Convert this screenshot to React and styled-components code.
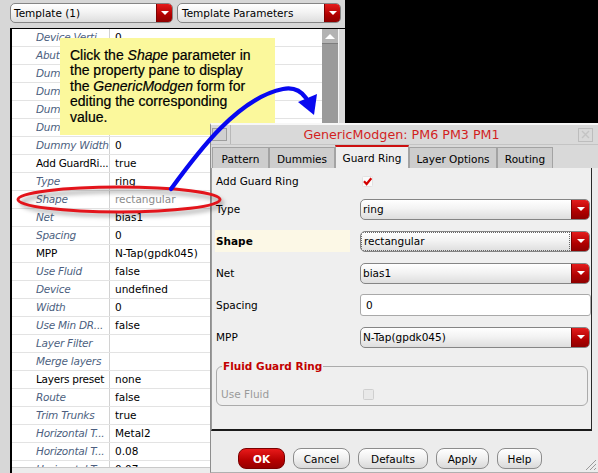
import React from "react";
import styled, { createGlobalStyle } from "styled-components";

const GlobalStyle = createGlobalStyle`
  html, body {
    margin: 0;
    padding: 0;
    background: #000;
  }
  body {
    font-family: "DejaVu Sans", "Noto Sans", sans-serif;
    font-size: 10.5px;
    color: #000;
  }
`;

const Screen = styled.div`
  position: relative;
  width: 598px;
  height: 473px;
  overflow: hidden;
  display: flex;
  background: #000;
`;

/* ---------- left property pane ---------- */

const LeftPane = styled.div`
  width: 345px;
  height: 100%;
  box-sizing: border-box;
  padding-left: 10px;
  display: flex;
  flex-direction: column;
  background: #d7d7d7;
`;

const TopBar = styled.div`
  height: 28px;
  box-sizing: border-box;
  padding: 3px 4px 5px 0;
  display: flex;
  gap: 4px;
`;

const Combo = styled.div`
  flex: ${(p) => (p.$grow ? 1 : "none")};
  width: ${(p) => (p.$w ? `${p.$w}px` : "auto")};
  height: ${(p) => p.$h || 21}px;
  box-sizing: border-box;
  display: flex;
  align-items: stretch;
  border: 1px solid #858585;
  border-radius: 5px;
  overflow: hidden;
  background: linear-gradient(#ffffff, #f3f3f3 45%, #dedede);
`;

const ComboText = styled.span`
  flex: 1;
  display: flex;
  align-items: center;
  padding-left: ${(p) => p.$pad || 2}px;
  margin: ${(p) => (p.$focused ? "1px 2px 1px 1px" : "0")};
  outline: ${(p) => (p.$focused ? "1px dotted #666" : "none")};
  white-space: nowrap;
`;

const ComboArrow = styled.span`
  width: ${(p) => p.$w || 17}px;
  display: flex;
  align-items: center;
  justify-content: center;
  background: linear-gradient(#e41c1c, #b00000 60%, #8e0000);
  border-left: 1px solid #7c0000;
  &::after {
    content: "";
    border-left: 4px solid transparent;
    border-right: 4px solid transparent;
    border-top: 4px solid #fff;
  }
`;

const TableFrame = styled.div`
  flex: 1;
  min-height: 0;
  display: flex;
  border-top: 1px solid #000;
  border-left: 2px solid #000;
`;

const TableCol = styled.div`
  flex: 1;
  display: flex;
  flex-direction: column;
  background: #fff;
`;

const Rows = styled.div`
  flex: 1;
  overflow: hidden;
`;

const PropRow = styled.div`
  height: 18px;
  box-sizing: border-box;
  display: grid;
  grid-template-columns: 98px 1fr;
  border-bottom: 1px solid #e3e3e3;
  line-height: 17px;
`;

const PropName = styled.span`
  padding-left: 24px;
  border-right: 1px solid #d2d2d2;
  white-space: nowrap;
  overflow: hidden;
  letter-spacing: -0.25px;
  font-style: ${(p) => (p.$italic ? "italic" : "normal")};
  color: ${(p) => (p.$italic ? "#4d5f80" : "#000")};
`;

const PropValue = styled.span`
  padding-left: 5px;
  white-space: nowrap;
  overflow: hidden;
  color: ${(p) => (p.$dim ? "#8a8a8a" : "#000")};
`;

const HScroll = styled.div`
  height: 5px;
  background: #ececec;
  border-top: 1px solid #c9c9c9;
`;

const VScroll = styled.div`
  width: 16px;
  background: #9a9a9a;
`;

const ScrollUp = styled.div`
  height: 15px;
  box-sizing: border-box;
  background: #b3b3b3;
  border-bottom: 1px solid #7d7d7d;
  display: flex;
  align-items: center;
  justify-content: center;
  &::after {
    content: "";
    border-left: 5px solid transparent;
    border-right: 5px solid transparent;
    border-bottom: 5px solid #fff;
  }
`;

const Gutter = styled.div`
  width: 7px;
  box-sizing: border-box;
  background: #dadada;
  border-left: 1px solid #f5f5f5;
`;

const Desktop = styled.div`
  flex: 1;
  background: #000;
`;

/* ---------- GenericModgen dialog ---------- */

const Dialog = styled.div`
  position: absolute;
  left: 210px;
  top: 123px;
  width: 388px;
  height: 350px;
  box-sizing: border-box;
  display: flex;
  flex-direction: column;
  background: #ececec;
  border-top: 2px solid #f7f7f7;
  border-left: 1px solid #8e8e8e;
  border-bottom: 1px solid #b0b0b0;
`;

const TitleBar = styled.div`
  height: 19px;
  display: flex;
  align-items: center;
  background: #d9d9d9;
  border-bottom: 1px solid #c4c4c4;
`;

const SysBox = styled.div`
  width: 15px;
  height: 13px;
  margin: 0 3px 0 1px;
  border: 1px solid #9e9e9e;
  background: #d0d0d0;
  box-sizing: border-box;
`;

const Title = styled.div`
  flex: 1;
  height: 100%;
  display: flex;
  align-items: center;
  justify-content: center;
  border-left: 1px solid #b8b8b8;
  color: #d21f1f;
  font-size: 12.7px;
  padding-right: 6px;
`;

const CloseBox = styled.div`
  width: 15px;
  height: 14px;
  margin-right: 5px;
  border: 1px solid #bdbdbd;
  box-sizing: border-box;
  display: flex;
  align-items: center;
  justify-content: center;
`;

const TabStrip = styled.div`
  height: 23px;
  display: flex;
  align-items: flex-end;
  padding-left: 1px;
  background: #d9d9d9;
`;

const Tab = styled.div`
  width: ${(p) => p.$w}px;
  height: ${(p) => (p.$active ? 23 : 21)}px;
  box-sizing: border-box;
  display: flex;
  align-items: center;
  justify-content: center;
  padding-top: 1px;
  background: ${(p) => (p.$active ? "#eeeeee" : "#cdcdcd")};
  border: 1px solid #a3a3a3;
  border-bottom: none;
  border-top: ${(p) => (p.$active ? "2px solid #cc1010" : "1px solid #a3a3a3")};
  white-space: nowrap;
`;

const Panel = styled.div`
  height: 263px;
  margin-right: 6px;
  box-sizing: border-box;
  padding: 2px 1px 0 3px;
  display: flex;
  flex-direction: column;
  gap: 10px;
  background: #efefef;
  border-left: 1px solid #9c9c9c;
  border-right: 1px solid #2a2a2a;
  border-bottom: 2px solid #1a1a1a;
`;

const FormRow = styled.div`
  height: ${(p) => p.$h || 22}px;
  margin-top: ${(p) => p.$mt || 0}px;
  display: grid;
  grid-template-columns: ${(p) => p.$label || 135}px 1fr;
  column-gap: 10px;
  align-items: center;
`;

const FieldLabel = styled.div`
  height: 22px;
  display: flex;
  align-items: center;
  padding-left: 1px;
  font-weight: ${(p) => (p.$strong ? "bold" : "normal")};
  color: ${(p) => (p.$disabled ? "#9a9a9a" : "#000")};
  background: ${(p) => (p.$highlight ? "#fcf8e6" : "transparent")};
`;

const CheckWrap = styled.div`
  padding-left: 2px;
  display: flex;
  align-items: center;
`;

const TextInput = styled.div`
  height: 22px;
  box-sizing: border-box;
  display: flex;
  align-items: center;
  padding-left: 5px;
  background: #fff;
  border: 1px solid #a9a9a9;
  border-radius: 3px;
  margin-right: -1px;
`;

const GroupBox = styled.fieldset`
  margin: 2px 2px 0 1px;
  padding: 11px 3px 4px 3px;
  border: 1px solid #ababab;
  border-radius: 6px;
`;

const Legend = styled.legend`
  padding: 0 1px;
  margin-left: 2px;
  color: #c20000;
  font-weight: bold;
  font-size: 10.5px;
`;

const ButtonRow = styled.div`
  flex: 1;
  position: relative;
  display: flex;
  align-items: flex-start;
  gap: 8px;
  padding: 17px 0 0 27px;
`;

const Button = styled.div`
  width: ${(p) => p.$w}px;
  height: 21px;
  box-sizing: border-box;
  display: flex;
  align-items: center;
  justify-content: center;
  border-radius: 8px;
  border: 1px solid ${(p) => (p.$primary ? "#7a0000" : "#8c8c8c")};
  background: ${(p) =>
    p.$primary
      ? "linear-gradient(#e81a1a, #b60000 60%, #960000)"
      : "linear-gradient(#ffffff, #f1f1f1 45%, #d9d9d9)"};
  color: ${(p) => (p.$primary ? "#fff" : "#000")};
  font-weight: ${(p) => (p.$primary ? "bold" : "normal")};
`;

const Grip = styled.svg`
  position: absolute;
  right: 1px;
  bottom: 1px;
`;

/* ---------- annotation ---------- */

const Callout = styled.div`
  position: absolute;
  left: 60px;
  top: 38px;
  width: 215px;
  height: 97px;
  box-sizing: border-box;
  padding: 10px 0 0 10px;
  background: #fbf89c;
  font-family: "Liberation Sans", Arial, sans-serif;
  font-size: 14px;
  line-height: 15.4px;
  color: #000;
  -webkit-text-stroke: 0.2px #000;
`;

const Overlay = styled.svg`
  position: absolute;
  left: 0;
  top: 0;
  pointer-events: none;
`;

const properties = [
  { name: "Device Verti...", value: "0", italic: true },
  { name: "Abut...", value: "", italic: true },
  { name: "Dummy...", value: "", italic: true },
  { name: "Dummy...", value: "", italic: true },
  { name: "Dummy...", value: "", italic: true },
  { name: "Dummy...", value: "", italic: true },
  { name: "Dummy Width", value: "0", italic: true },
  { name: "Add GuardRi...", value: "true" },
  { name: "Type", value: "ring", italic: true },
  { name: "Shape", value: "rectangular", italic: true, dim: true },
  { name: "Net", value: "bias1", italic: true },
  { name: "Spacing", value: "0", italic: true },
  { name: "MPP", value: "N-Tap(gpdk045)" },
  { name: "Use Fluid", value: "false", italic: true },
  { name: "Device", value: "undefined", italic: true },
  { name: "Width", value: "0", italic: true },
  { name: "Use Min DR...", value: "false", italic: true },
  { name: "Layer Filter", value: "", italic: true },
  { name: "Merge layers", value: "", italic: true },
  { name: "Layers preset", value: "none" },
  { name: "Route", value: "false", italic: true },
  { name: "Trim Trunks", value: "true", italic: true },
  { name: "Horizontal T...", value: "Metal2", italic: true },
  { name: "Horizontal T...", value: "0.08", italic: true },
  { name: "Horizontal T...", value: "0.07", italic: true },
];

const tabs = [
  { label: "Pattern", w: 57 },
  { label: "Dummies", w: 66 },
  { label: "Guard Ring", w: 74, active: true },
  { label: "Layer Options", w: 88 },
  { label: "Routing", w: 56 },
];

const buttons = [
  { label: "OK", w: 47, primary: true },
  { label: "Cancel", w: 57 },
  { label: "Defaults", w: 70 },
  { label: "Apply", w: 53 },
  { label: "Help", w: 45 },
];

function Check({ checked, disabled }) {
  return (
    <svg width="11" height="11" viewBox="0 0 11 11">
      <rect
        x="0.5"
        y="0.5"
        width="10"
        height="10"
        rx="1"
        fill={disabled ? "#e9e9e9" : "#fafafa"}
        stroke={disabled ? "#cfcfcf" : "#e2e2e2"}
      />
      {checked && (
        <path d="M2 5.2 L4.6 8 L9.3 2.2" fill="none" stroke="#d40000" strokeWidth="2.2" />
      )}
    </svg>
  );
}

function Select({ value, focused }) {
  return (
    <Combo>
      <ComboText $focused={focused}>{value}</ComboText>
      <ComboArrow />
    </Combo>
  );
}

export default function App() {
  return (
    <>
      <GlobalStyle />
      <Screen>
        <LeftPane>
          <TopBar>
            <Combo $w={163} $h={20}>
              <ComboText $pad={3}>Template (1)</ComboText>
              <ComboArrow $w={15} />
            </Combo>
            <Combo $grow $h={20}>
              <ComboText $pad={4}>Template Parameters</ComboText>
              <ComboArrow $w={15} />
            </Combo>
          </TopBar>
          <TableFrame>
            <TableCol>
              <Rows>
                {properties.map((p, i) => (
                  <PropRow key={i}>
                    <PropName $italic={p.italic}>{p.name}</PropName>
                    <PropValue $dim={p.dim}>{p.value}</PropValue>
                  </PropRow>
                ))}
              </Rows>
              <HScroll />
            </TableCol>
            <VScroll>
              <ScrollUp />
            </VScroll>
            <Gutter />
          </TableFrame>
        </LeftPane>
        <Desktop />

        <Callout>
          Click the <i>Shape</i> parameter in
          <br />
          the property pane to display
          <br />
          the <i>GenericModgen</i> form for
          <br />
          editing the corresponding
          <br />
          value.
        </Callout>

        <Dialog>
          <TitleBar>
            <SysBox />
            <Title>GenericModgen: PM6 PM3 PM1</Title>
            <CloseBox>
              <svg width="9" height="9" viewBox="0 0 9 9">
                <path d="M1 1 L8 8 M8 1 L1 8" stroke="#c4c4c4" strokeWidth="1.4" />
              </svg>
            </CloseBox>
          </TitleBar>
          <TabStrip>
            {tabs.map((t) => (
              <Tab key={t.label} $w={t.w} $active={t.active}>
                {t.label}
              </Tab>
            ))}
          </TabStrip>
          <Panel>
            <FormRow $h={20}>
              <FieldLabel>Add Guard Ring</FieldLabel>
              <CheckWrap>
                <Check checked />
              </CheckWrap>
            </FormRow>
            <FormRow $mt={-2}>
              <FieldLabel>Type</FieldLabel>
              <Select value="ring" />
            </FormRow>
            <FormRow>
              <FieldLabel $strong $highlight>
                Shape
              </FieldLabel>
              <Select value="rectangular" focused />
            </FormRow>
            <FormRow>
              <FieldLabel>Net</FieldLabel>
              <Select value="bias1" />
            </FormRow>
            <FormRow>
              <FieldLabel>Spacing</FieldLabel>
              <TextInput>0</TextInput>
            </FormRow>
            <FormRow>
              <FieldLabel>MPP</FieldLabel>
              <Select value="N-Tap(gpdk045)" />
            </FormRow>
            <GroupBox>
              <Legend>Fluid Guard Ring</Legend>
              <FormRow $h={18} $label={131}>
                <FieldLabel $disabled>Use Fluid</FieldLabel>
                <CheckWrap>
                  <Check disabled />
                </CheckWrap>
              </FormRow>
            </GroupBox>
          </Panel>
          <ButtonRow>
            {buttons.map((b) => (
              <Button key={b.label} $w={b.w} $primary={b.primary}>
                {b.label}
              </Button>
            ))}
            <Grip width="14" height="14" viewBox="0 0 14 14">
              <path
                d="M13 3 L3 13 M13 7 L7 13 M13 11 L11 13"
                stroke="#9a9a9a"
                strokeWidth="1"
              />
            </Grip>
          </ButtonRow>
        </Dialog>

        <Overlay width="598" height="473" viewBox="0 0 598 473">
          <defs>
            <filter id="soft" x="-20%" y="-80%" width="140%" height="260%">
              <feGaussianBlur stdDeviation="2.2" />
            </filter>
          </defs>
          <ellipse
            cx="122"
            cy="203"
            rx="100"
            ry="12"
            fill="none"
            stroke="#000"
            strokeOpacity="0.28"
            strokeWidth="4"
            filter="url(#soft)"
          />
          <ellipse cx="119" cy="199.5" rx="101" ry="12.5" fill="none" stroke="#e3141b" strokeWidth="3" />
          <path
            d="M171 189 C 198 152 238 98 283 89 C 293 87 301 91 306 98"
            fill="none"
            stroke="#0808f0"
            strokeWidth="4.3"
            strokeLinecap="round"
          />
          <polygon points="298,102 317,94 314,115" fill="#0808f0" />
        </Overlay>
      </Screen>
    </>
  );
}
